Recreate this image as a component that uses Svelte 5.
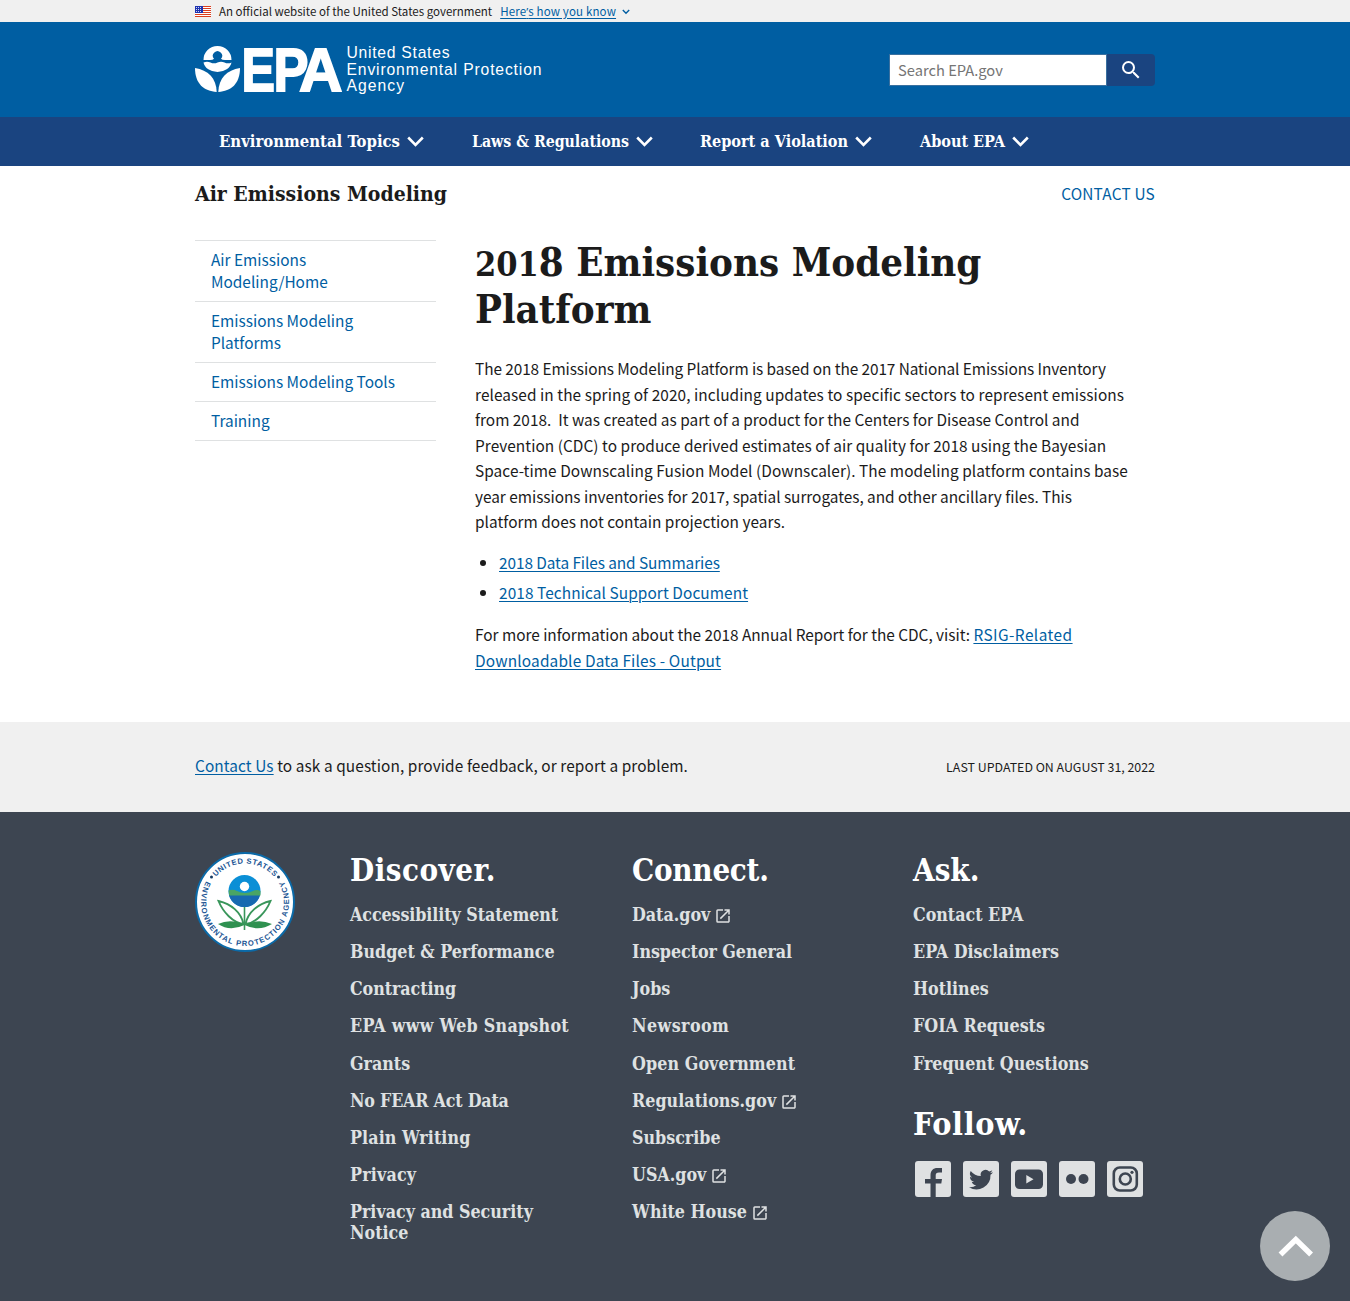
<script>
  const navItems = [
    { label: 'Environmental Topics', width: 181 },
    { label: 'Laws & Regulations', width: 157 },
    { label: 'Report a Violation', width: 148 },
    { label: 'About EPA', width: 85 }
  ];
  // Each line carries its own tracking, in pixels.
  const intro = [
    { text: 'The 2018 Emissions Modeling Platform is based on the 2017 National Emissions Inventory', tracking: -0.08 },
    { text: 'released in the spring of 2020, including updates to specific sectors to represent emissions', tracking: 0.073 },
    { text: 'from 2018.\u00a0 It was created as part of a product for the Centers for Disease Control and', tracking: 0 },
    { text: 'Prevention (CDC) to produce derived estimates of air quality for 2018 using the Bayesian', tracking: 0.045 },
    { text: 'Space-time Downscaling Fusion Model (Downscaler). The modeling platform contains base', tracking: 0.067 },
    { text: 'year emissions inventories for 2017, spatial surrogates, and other ancillary files. This', tracking: -0.025 },
    { text: 'platform does not contain projection years.', tracking: 0.03 }
  ];
  const discover = [
    { label: 'Accessibility Statement', tracking: -0.07 },
    { label: 'Budget & Performance', tracking: 0 },
    { label: 'Contracting', tracking: -0.05 },
    { label: 'EPA www Web Snapshot', tracking: 0.27 },
    { label: 'Grants', tracking: 0 },
    { label: 'No FEAR Act Data', tracking: -0.2 },
    { label: 'Plain Writing', tracking: 0.1 },
    { label: 'Privacy', tracking: 0.2 },
    { label: 'Privacy and Security Notice', tracking: 0 }
  ];
  const connect = [
    { label: 'Data.gov', external: true },
    { label: 'Inspector General', tracking: -0.05 },
    { label: 'Jobs' },
    { label: 'Newsroom', tracking: 0.45 },
    { label: 'Open Government', tracking: 0.1 },
    { label: 'Regulations.gov', external: true, tracking: 0.05 },
    { label: 'Subscribe' },
    { label: 'USA.gov', external: true },
    { label: 'White House', external: true }
  ];
  const ask = ['Contact EPA', 'EPA Disclaimers', 'Hotlines', 'FOIA Requests', 'Frequent Questions'];
  const stripes = [0, 2, 4, 6, 8, 10];
</script>

<div class="gov">
  <div class="wrap gov-row">
    <svg class="flag" width="16" height="11" viewBox="0 0 16 11">
      <rect width="16" height="11" fill="#fff" />
      {#each stripes as y}
        <rect {y} width="16" height="1" fill="#db3e1f" />
      {/each}
      <rect width="8" height="7" fill="#1e33b1" />
      <path d="M1 1.500h6M1 3.500h6M1 5.500h6" stroke="#fff" stroke-width=".8" stroke-dasharray="1 1" />
    </svg>
    <span class="gov-text">An official website of the United States government</span>
    <a class="gov-link" href="#top">Here<span class="apos">’</span>s how you know</a>
    <svg class="gov-chev" width="8" height="6" viewBox="0 0 8 6"><path d="M.8 1l3.200 3.200L7.200 1" fill="none" stroke="#005ea2" stroke-width="1.400" /></svg>
  </div>
</div>

<header class="masthead">
  <div class="wrap mast-row">
    <svg class="logo" width="350" height="52" viewBox="0 0 350 52">
      <g fill="#fff">
        <path d="M8.500 16A14 14 0 0 1 36.500 16H30Q27 16 26 14.700A4.600 4.600 0 1 0 19 14.700Q18 16 15 16Z" />
        <path d="M8.500 18.500Q12 16.800 15.500 18.500T22.500 18.500T29.500 18.500T36.500 18.500A14.200 11.500 0 0 1 8.500 18.500Z" />
        <path d="M0 24C13 26 21.300 34 21.700 48C9 47 0 40 0 24Z" />
        <path d="M45 24C32 26 23.700 34 23.300 48C36 47 45 40 45 24Z" />
        <text class="epa" y="46.500"><tspan x="46.500" textLength="33.500" lengthAdjust="spacingAndGlyphs">E</tspan><tspan x="78.500" textLength="35" lengthAdjust="spacingAndGlyphs">P</tspan><tspan x="104" textLength="43.500" lengthAdjust="spacingAndGlyphs">A</tspan></text>
        <text class="agency" x="151.500" y="14" textLength="103">United States</text>
        <text class="agency" x="151.500" y="30.500" textLength="195">Environmental Protection</text>
        <text class="agency" x="151.500" y="47" textLength="57.500">Agency</text>
      </g>
    </svg>
    <form class="search">
      <span class="field">Search EPA.gov</span>
      <span class="go">
        <svg width="24" height="24" viewBox="0 0 24 24" fill="#fff"><path d="M15.500 14h-.79l-.28-.27A6.470 6.470 0 0 0 16 9.500 6.500 6.500 0 1 0 9.500 16c1.610 0 3.090-.59 4.230-1.570l.27.28v.79l5 4.990L20.490 19l-4.990-5zm-6 0C7.010 14 5 11.990 5 9.500S7.010 5 9.500 5 14 7.010 14 9.500 11.990 14 9.500 14z" /></svg>
      </span>
    </form>
  </div>
</header>

<nav class="mainnav">
  <div class="wrap nav-row">
    {#each navItems as item}
      <a class="nav-item" href="#top">
        <svg class="nav-label" width={item.width} height="24"><text x="0" y="17" textLength={item.width} lengthAdjust="spacingAndGlyphs">{item.label}</text></svg>
        <svg width="17" height="11" viewBox="0 0 17 11"><path d="M1.200 1.500L8.500 8.800l7.300-7.300" fill="none" stroke="#fff" stroke-width="2.600" /></svg>
      </a>
    {/each}
  </div>
</nav>

<div class="wrap site-row">
  <h2 class="site-name">Air Emissions Modeling</h2>
  <a class="plain" href="#top">CONTACT US</a>
</div>

<div class="wrap body-row">
  <aside class="side">
    <a href="#top">Air Emissions<br />Modeling/Home</a>
    <a href="#top">Emissions Modeling<br />Platforms</a>
    <a href="#top">Emissions Modeling Tools</a>
    <a href="#top">Training</a>
  </aside>
  <main>
    <h1><span class="line"><span class="old">201</span>8 Emissions Modeling</span><span class="line">Platform</span></h1>
    <p>
      {#each intro as line}<span class="line" style:letter-spacing="{line.tracking}px">{line.text}</span>{/each}
    </p>
    <ul>
      <li><a class="tight" href="#top">2018 Data Files and Summaries</a></li>
      <li><a class="loose" href="#top">2018 Technical Support Document</a></li>
    </ul>
    <p>
      <span class="more">For more information about the 2018 Annual Report for the CDC, visit:</span> <a class="wide" href="#top"><span class="wider">RSIG-Related</span><br />Downloadable Data Files - Output</a>
    </p>
  </main>
</div>

<div class="feedback">
  <div class="wrap feedback-row">
    <span class="loose ask-line"><a href="#top">Contact Us</a> to ask a question, provide feedback, or report a problem.</span>
    <span class="updated">LAST UPDATED ON AUGUST 31, 2022</span>
  </div>
</div>

<footer>
  <div class="wrap foot-row">
    <svg class="seal" width="100" height="100" viewBox="0 0 100 100">
      <circle cx="50" cy="50" r="49" fill="#fff" stroke="#0b6aa8" stroke-width="2" />
      <defs>
        <path id="arc-top" d="M11.500 50A38.500 38.500 0 0 1 88.500 50" />
        <path id="arc-bottom" d="M13.500 25.500A44 44 0 1 0 86.500 25.500" />
      </defs>
      <text class="seal-text"><textPath href="#arc-top" startOffset="50%" text-anchor="middle" textLength="66">UNITED STATES</textPath></text>
      <text class="seal-text"><textPath href="#arc-bottom" startOffset="50%" text-anchor="middle" textLength="182">ENVIRONMENTAL PROTECTION AGENCY</textPath></text>
      <circle cx="16.500" cy="25" r="1.500" fill="#153a63" />
      <circle cx="83.500" cy="25" r="1.500" fill="#153a63" />
      <circle cx="49.500" cy="39" r="16" fill="#0b8fd6" />
      <path d="M34 43A16 16 0 0 0 65 43Z" fill="#1769b0" />
      <path d="M33.500 38.500Q38 37 42 39T50 41T58 39T65.500 39V43.500H34.200Z" fill="#4aa564" />
      <circle cx="49.500" cy="34.500" r="4.700" fill="#fff" />
      <path d="M49.500 55V78" stroke="#39965a" stroke-width="1.600" />
      <path d="M48.500 72C38 71 28 60 23.500 49C36 52 46 60 48.500 72Z" fill="#fff" stroke="#39965a" stroke-width="1.900" />
      <path d="M50.500 72C61 71 71 60 75.500 49C63 52 53 60 50.500 72Z" fill="#fff" stroke="#39965a" stroke-width="1.900" />
      <path d="M49.500 73Q36 66 23 72Q35 80 49.500 73Q64 80 77 72Q63 66 49.500 73Z" fill="#2f9150" />
    </svg>
    <section class="col">
      <h3 class="h-discover">Discover.</h3>
      {#each discover as item}<a href="#top" style:letter-spacing="{item.tracking}px">{item.label}</a>{/each}
    </section>
    <section class="col">
      <h3 class="h-connect">Connect.</h3>
      {#each connect as item}
        <a href="#top" style:letter-spacing="{item.tracking ?? 0}px">{item.label}{#if item.external}<svg class="ext" width="18" height="18" viewBox="0 0 24 24"><path fill="#dfe1e2" d="M19 19H5V5h7V3H5a2 2 0 0 0-2 2v14a2 2 0 0 0 2 2h14c1.100 0 2-.9 2-2v-7h-2v7zM14 3v2h3.590l-9.830 9.830 1.410 1.410L19 6.410V10h2V3h-7z" /></svg>{/if}</a>
      {/each}
    </section>
    <section class="col ask">
      <h3>Ask.</h3>
      {#each ask as item}<a href="#top">{item}</a>{/each}
      <h3 class="follow">Follow.</h3>
      <div class="social">
        <svg viewBox="0 0 36 36"><rect width="36" height="36" rx="3" /><path class="ink" d="M15.500 36V22.500H10V18h5.500v-3.500C15.500 9.500 18 7 22.500 7H27v4.500h-3c-2.500 0-3.300 1-3.300 3V18H27l-.7 4.500h-5.600V36z" /></svg>
        <svg viewBox="0 0 36 36"><rect width="36" height="36" rx="3" /><path class="ink" d="M30 11.200a10 10 0 0 1-2.800.8 5 5 0 0 0 2.100-2.700 10 10 0 0 1-3.100 1.200 4.900 4.900 0 0 0-8.400 4.500A14 14 0 0 1 7.700 9.900a4.900 4.900 0 0 0 1.500 6.500 5 5 0 0 1-2.200-.6 4.900 4.900 0 0 0 3.900 4.900 5 5 0 0 1-2.200.1 4.900 4.900 0 0 0 4.600 3.400A9.900 9.900 0 0 1 6 26.200 14 14 0 0 0 27.500 13.800 10 10 0 0 0 30 11.200z" /></svg>
        <svg viewBox="0 0 36 36"><rect width="36" height="36" rx="3" /><rect class="ink" x="4" y="8.500" width="28" height="19.500" rx="4.500" /><path d="M15.300 14v8.500l7.200-4.200z" /></svg>
        <svg viewBox="0 0 36 36"><rect width="36" height="36" rx="3" /><circle class="ink" cx="12" cy="18" r="5" /><circle class="ink" cx="24.500" cy="18" r="5" /></svg>
        <svg viewBox="0 0 36 36"><rect width="36" height="36" rx="3" /><rect class="stroke" x="6.800" y="6.500" width="23" height="23" rx="6" /><circle class="stroke" cx="18.300" cy="18" r="5.500" /><circle class="ink" cx="25" cy="11.300" r="1.600" /></svg>
      </div>
    </section>
  </div>
</footer>

<a class="totop" href="#top" aria-label="Back to top"><svg width="36" height="24" viewBox="0 0 36 24"><path d="M3.500 20.500L18.800 5.500l15.300 15" fill="none" stroke="#fff" stroke-width="5.500" /></svg></a>

<style>
  :global(body) { margin: 0; background: #fff; }
  :global(#app) { font: 15.400px/25.500px "Noto Sans CJK SC", "Open Sans", sans-serif; color: #1b1b1b; }
  a { color: #005ea2; text-underline-offset: 1.500px; text-decoration-thickness: 1px; }
  h1, h2, h3, p, ul { margin: 0; }
  h1, h2, h3, .col a { font-family: "DejaVu Serif Condensed", "DejaVu Serif", serif; font-weight: 700; font-stretch: condensed; }
  .wrap { width: 960px; margin: 0 auto; display: flex; }
  .line { display: block; }
  .tight { letter-spacing: -.08px; }
  .loose { letter-spacing: .085px; }
  .wide { letter-spacing: .17px; }
  .wider { letter-spacing: .45px; }
  .gov { height: 22px; background: #f0f0f0; }
  .gov-row { height: 22px; align-items: center; font-size: 11.520px; line-height: 22px; white-space: nowrap; }
  .flag { margin-right: 8px; }
  .gov-text { margin-right: 8px; }
  .gov-link { letter-spacing: .14px; }
  .apos { font-family: "Open Sans", sans-serif; }
  .gov-chev { margin-left: 6px; margin-top: 2px; }
  .masthead { height: 95px; background: #005ea2; }
  .mast-row { height: 95px; justify-content: space-between; align-items: center; }
  .logo { overflow: visible; }
  .epa { font: 700 61px "Liberation Sans", sans-serif; stroke: #fff; stroke-width: 1.800px; }
  .agency { font: 15.700px "Liberation Sans", sans-serif; }
  .search { display: flex; height: 32px; width: 266px; }
  .field { box-sizing: border-box; width: 218px; border: 1px solid #39709f; background: #fff; color: #757575; padding-left: 8px; line-height: 30px; font-size: 14.700px; }
  .go { flex: 1; background: #1a4480; border-radius: 0 4px 4px 0; display: flex; align-items: center; justify-content: center; }
  .mainnav { height: 49px; background: #1a4480; }
  .nav-row { box-sizing: border-box; height: 49px; padding-left: 24px; gap: 47.700px; align-items: center; }
  .nav-item { display: flex; align-items: center; gap: 7px; text-decoration: none; }
  .nav-label { overflow: visible; fill: #fff; font: 700 16px "DejaVu Serif Condensed", "DejaVu Serif", serif; font-stretch: condensed; }
  .site-row { height: 56px; align-items: center; justify-content: space-between; }
  .site-name { font-size: 21px; line-height: 28px; }
  .plain { text-decoration: none; letter-spacing: .2px; margin-top: -1px; }
  .body-row { height: 500px; gap: 39px; }
  .side { width: 241px; padding-top: 18px; }
  .side a { display: block; border-top: 1px solid #dfe1e2; padding: 7px 16px 9px; line-height: 22px; text-decoration: none; }
  .side a:last-child { border-bottom: 1px solid #dfe1e2; }
  main { width: 680px; padding-top: 17px; white-space: nowrap; }
  h1 { font-size: 39.850px; line-height: 47px; margin-bottom: 23px; }
  .old { font-size: 34px; line-height: 0; }
  ul { padding: 0 0 0 24px; margin: 15px 0 17px; }
  li { margin-bottom: 4.500px; }
  .more { letter-spacing: -.025px; }
  .feedback { background: #f0f0f0; height: 90px; }
  .feedback-row { height: 90px; align-items: center; justify-content: space-between; }
  .ask-line { margin-top: -2px; }
  .updated { font-size: 12.400px; margin-top: 1px; }
  footer { background: #3d4551; height: 489px; }
  .foot-row { padding-top: 40px; }
  .seal { flex: none; margin-right: 55px; }
  .seal-text { font: 700 7.600px "Liberation Sans", sans-serif; fill: #205493; }
  .col { width: 241px; margin-right: 41px; flex: none; }
  .ask { margin-left: -1px; margin-right: 0; }
  h3 { color: #fff; font-size: 31px; line-height: 36px; margin-bottom: 16px; white-space: nowrap; }
  .h-discover { letter-spacing: .5px; }
  .h-connect { letter-spacing: -.25px; }
  .col a { display: block; color: #dfe1e2; text-decoration: none; font-size: 17.700px; line-height: 21px; margin-bottom: 16.150px; }
  .ext { vertical-align: -4px; margin-left: 4px; }
  .follow { margin: 32px 0 19px; font-size: 32px; letter-spacing: .6px; }
  .social { display: flex; gap: 12px; padding-left: 2px; }
  .social svg { width: 36px; height: 36px; fill: #dfe1e2; }
  .social .ink { fill: #3d4551; }
  .social .stroke { fill: none; stroke: #3d4551; stroke-width: 2.600px; }
  .totop { position: fixed; right: 20px; bottom: 20px; width: 70px; height: 70px; border-radius: 50%; background: #a9aeb1; display: flex; align-items: center; justify-content: center; }
</style>
